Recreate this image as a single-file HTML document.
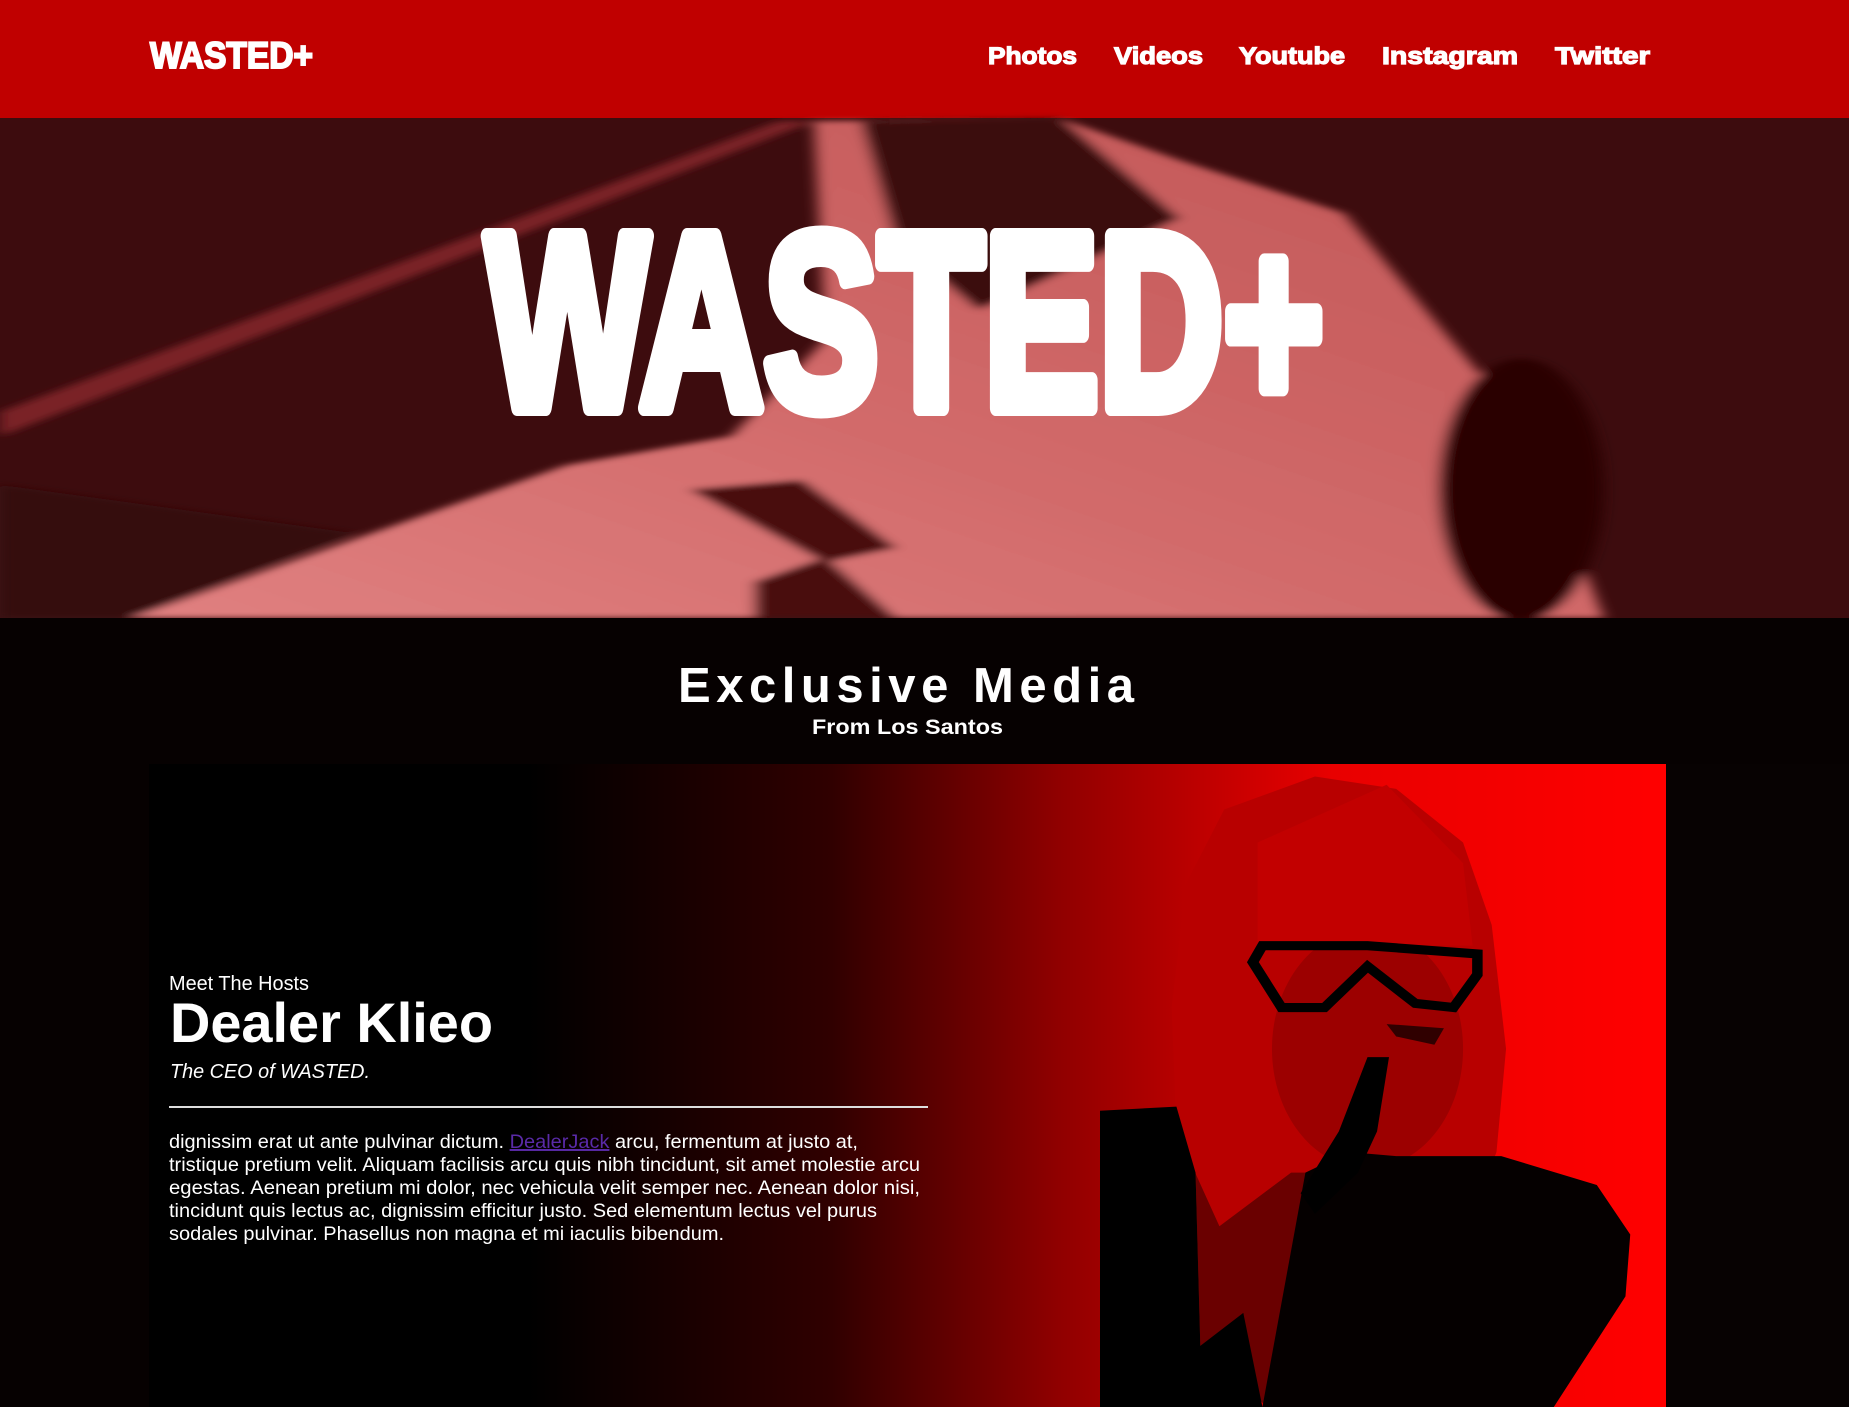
<!DOCTYPE html>
<html><head><meta charset="utf-8"><style>
html,body{margin:0;padding:0;background:#060101;width:1849px;height:1407px;overflow:hidden}
svg{position:absolute;left:0;top:0}
</style></head><body>
<svg width="1849" height="1407" viewBox="0 0 1849 1407" xmlns="http://www.w3.org/2000/svg">
<defs>
<linearGradient id="card" x1="0" x2="1" y1="0" y2="0">
<stop offset="0" stop-color="#000"/><stop offset="0.25" stop-color="#000"/>
<stop offset="0.45" stop-color="#300000"/><stop offset="0.6" stop-color="#900000"/>
<stop offset="0.78" stop-color="#e80000"/><stop offset="1" stop-color="#ff0000"/>
</linearGradient>
<linearGradient id="car" x1="0" x2="1" y1="1" y2="0">
<stop offset="0" stop-color="#e08080"/><stop offset="0.5" stop-color="#d06868"/><stop offset="1" stop-color="#c05555"/>
</linearGradient>
<filter id="blur"><feGaussianBlur stdDeviation="6"/></filter>
</defs>
<rect x="0" y="0" width="1849" height="118" fill="#c00000"/>
<rect x="0" y="118" width="1849" height="500" fill="#3d0c0e"/>
<g transform="scale(1.1792,0.4847)" filter="url(#blur)">
<path d="M0 850 L660 250 L690 250 L0 900Z" fill="#7a2226"/>
<path d="M110 1275 L480 960 L620 900 L700 700 L690 250 L900 245 L1000 330 L1140 440 L1230 700 L1300 900 L1360 1275Z" fill="url(#car)"/>
<path d="M730 250 L900 245 L1000 450 L830 640 L760 500Z" fill="#3a0a0c"/>
<ellipse cx="1290" cy="1010" rx="70" ry="270" fill="#2a0506"/>
<path d="M585 1010 L680 990 L760 1130 L700 1160Z" fill="#4a0d10"/>
<path d="M640 1200 L700 1150 L760 1275 L640 1275Z" fill="#4a0d10"/>
<path d="M0 1275 L0 1000 L300 1100 L110 1275Z" fill="#35090b"/>
</g>
<rect x="0" y="618" width="1849" height="10" fill="#060101"/>
<rect x="149" y="764" width="1517" height="643" fill="url(#card)"/>
<g transform="translate(1100,760) scale(0.4777,0.4126)">
<path d="M200 1000 L330 950 L450 1000 L350 1568 L210 1420Z" fill="#6a0000"/>
<path d="M180 300 L260 120 L450 40 L620 70 L760 200 L820 400 L850 700 L830 950 L780 1100 L700 1050 L560 1000 L400 1000 L250 1130 L160 900 L150 600Z" fill="#b80000"/>
<ellipse cx="560" cy="700" rx="200" ry="290" fill="#9c0000"/>
<path d="M330 200 L600 60 L760 250 L780 450 L560 450 L330 450Z" fill="#c20000"/>
<path d="M320 490 L340 450 L560 450 L790 470 L790 520 L740 600 L660 590 L560 500 L470 600 L380 600Z" fill="none" stroke="#000" stroke-width="22"/>
<path d="M600 640 L720 650 L700 690 L620 670Z" fill="#300000"/>
<path d="M0 850 L160 840 L200 1000 L210 1420 L300 1340 L340 1568 L0 1568Z" fill="#000"/>
<path d="M620 960 L840 960 L1040 1030 L1110 1150 L1100 1300 L950 1568 L340 1568 L430 1000 L520 950Z" fill="#050000"/>
<path d="M560 720 L605 720 L580 900 L540 1000 L450 1100 L420 1050 L500 900Z" fill="#000"/>
</g>
<rect x="1667" y="764" width="182" height="643" fill="#070202"/>
<g font-family="Liberation Sans, Arial, sans-serif" fill="#fff">
<text x="150" y="68" font-size="37" font-weight="bold" stroke="#fff" stroke-width="2" textLength="163" lengthAdjust="spacingAndGlyphs">WASTED+</text>
<g font-size="24" font-weight="bold" stroke="#fff" stroke-width="1.2">
<text x="988" y="64" textLength="89" lengthAdjust="spacingAndGlyphs">Photos</text>
<text x="1114" y="64" textLength="89" lengthAdjust="spacingAndGlyphs">Videos</text>
<text x="1239" y="64" textLength="106" lengthAdjust="spacingAndGlyphs">Youtube</text>
<text x="1382" y="64" textLength="136" lengthAdjust="spacingAndGlyphs">Instagram</text>
<text x="1555" y="64" textLength="95" lengthAdjust="spacingAndGlyphs">Twitter</text>
</g>
<text x="486" y="408" font-size="250" font-weight="bold" stroke="#fff" stroke-width="16" stroke-linejoin="round" textLength="838" lengthAdjust="spacingAndGlyphs">WASTED+</text>
<text x="678" y="702" font-size="49" font-weight="bold" textLength="456" lengthAdjust="spacing">Exclusive Media</text>
<text x="812" y="734" font-size="21" font-weight="bold" textLength="191" lengthAdjust="spacingAndGlyphs">From Los Santos</text>
<text x="169" y="990" font-size="20" textLength="140" lengthAdjust="spacingAndGlyphs">Meet The Hosts</text>
<text x="170" y="1042" font-size="56" font-weight="bold" textLength="323" lengthAdjust="spacingAndGlyphs">Dealer Klieo</text>
<text x="170" y="1078" font-size="20" font-style="italic" textLength="200" lengthAdjust="spacingAndGlyphs">The CEO of WASTED.</text>
<rect x="169" y="1106" width="759" height="2" fill="#ddd"/>
<g font-size="19.5">
<text x="169" y="1148" textLength="689" lengthAdjust="spacingAndGlyphs">dignissim erat ut ante pulvinar dictum. <tspan fill="#5a2aa8" text-decoration="underline">DealerJack</tspan> arcu, fermentum at justo at,</text>
<text x="169" y="1171" textLength="751" lengthAdjust="spacingAndGlyphs">tristique pretium velit. Aliquam facilisis arcu quis nibh tincidunt, sit amet molestie arcu</text>
<text x="169" y="1194" textLength="751" lengthAdjust="spacingAndGlyphs">egestas. Aenean pretium mi dolor, nec vehicula velit semper nec. Aenean dolor nisi,</text>
<text x="169" y="1217" textLength="708" lengthAdjust="spacingAndGlyphs">tincidunt quis lectus ac, dignissim efficitur justo. Sed elementum lectus vel purus</text>
<text x="169" y="1240" textLength="555" lengthAdjust="spacingAndGlyphs">sodales pulvinar. Phasellus non magna et mi iaculis bibendum.</text>
</g>
</g>
</svg>
</body></html>
